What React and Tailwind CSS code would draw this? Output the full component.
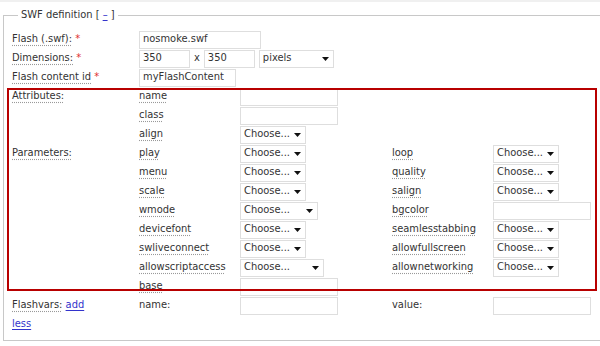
const font = { fontFamily: '"DejaVu Sans Condensed", "DejaVu Sans", Verdana, sans-serif' }

function Label({ children, req }) {
  return (
    <span className="text-[#333]">
      <span className="underline decoration-dotted decoration-[#999] underline-offset-[3px]">{children}</span>
      {req && <span className="text-[#e03030]"> *</span>}
    </span>
  )
}

function Input({ w = "w-[98px]", value }) {
  return (
    <div className={`${w} h-[18px] border border-[#dedede] bg-white px-[3px] flex items-center text-[#333]`}>
      {value}
    </div>
  )
}

function Select({ w = "w-[66px]", value = "Choose..." }) {
  return (
    <div className={`${w} h-[18px] border border-[#dedede] bg-white pl-[3px] pr-[4px] flex items-center justify-between text-[#333]`}>
      <span>{value}</span>
      <svg width="7" height="4" viewBox="0 0 7 4">
        <path d="M0 0h7L3.5 4z" fill="#111" />
      </svg>
    </div>
  )
}

function Link({ children }) {
  return <a className="text-[#3333cc] underline underline-offset-2">{children}</a>
}

function Row({ children }) {
  return <div className="contents">{children}</div>
}

export default function App() {
  const cell = "h-[19px] flex items-center"
  return (
    <div className="w-[600px] h-[346px] bg-white overflow-hidden relative text-[11px]" style={font}>
      <div className="h-[2px] bg-[#f0f0f0]" />
      <fieldset className="mt-[6px] ml-[3px] w-[640px] border border-[#c8c8c8] pl-[8px] pt-[8px] pb-[6px]">
        <legend className="ml-[6px] px-[3px] leading-[14px] text-[#333]">
          SWF definition [ <Link>–</Link> ]
        </legend>
        <div className="grid grid-cols-[127px_101px_152px_101px_1fr]">
          <div className={cell}><Label req>Flash (.swf):</Label></div>
          <div className={`${cell} col-span-4`}><Input w="w-[122px]" value="nosmoke.swf" /></div>

          <div className={cell}><Label req>Dimensions:</Label></div>
          <div className={`${cell} col-span-4`}>
            <Input w="w-[51px]" value="350" />
            <span className="mx-[4px] text-[#333]">x</span>
            <Input w="w-[51px]" value="350" />
            <div className="ml-[4px]"><Select w="w-[75px]" value="pixels" /></div>
          </div>

          <div className={cell}><Label req>Flash content id</Label></div>
          <div className={`${cell} col-span-4`}><Input w="w-[97px]" value="myFlashContent" /></div>

          <div className={cell}><Label>Attributes:</Label></div>
          <div className={cell}><Label>name</Label></div>
          <div className={`${cell} col-span-3`}><Input /></div>

          <div className={cell} />
          <div className={cell}><Label>class</Label></div>
          <div className={`${cell} col-span-3`}><Input /></div>

          <div className={cell} />
          <div className={cell}><Label>align</Label></div>
          <div className={`${cell} col-span-3`}><Select /></div>

          {[
            ["Parameters:", "play", "w-[66px]", "loop", "s"],
            ["", "menu", "w-[66px]", "quality", "s"],
            ["", "scale", "w-[66px]", "salign", "s"],
            ["", "wmode", "w-[78px]", "bgcolor", "i"],
            ["", "devicefont", "w-[66px]", "seamlesstabbing", "s"],
            ["", "swliveconnect", "w-[66px]", "allowfullscreen", "s"],
            ["", "allowscriptaccess", "w-[84px]", "allownetworking", "s"],
          ].map(([head, a, aw, b, bt]) => (
            <Row key={a}>
              <div className={cell}>{head && <Label>{head}</Label>}</div>
              <div className={cell}><Label>{a}</Label></div>
              <div className={cell}><Select w={aw} /></div>
              <div className={cell}><Label>{b}</Label></div>
              <div className={cell}>{bt === "s" ? <Select /> : <Input />}</div>
            </Row>
          ))}

          <div className={cell} />
          <div className={cell}><Label>base</Label></div>
          <div className={`${cell} col-span-3`}><Input /></div>

          <div className={cell}><Label>Flashvars:</Label>&nbsp;<Link>add</Link></div>
          <div className={`${cell} text-[#333]`}>name:</div>
          <div className={cell}><Input /></div>
          <div className={`${cell} text-[#333]`}>value:</div>
          <div className={cell}><Input /></div>

          <div className={`${cell} col-span-5`}><Link>less</Link></div>
        </div>
      </fieldset>
      <div className="absolute left-[7px] top-[88px] w-[590px] h-[203px] border-2 border-[#b80000] pointer-events-none" />
    </div>
  )
}
